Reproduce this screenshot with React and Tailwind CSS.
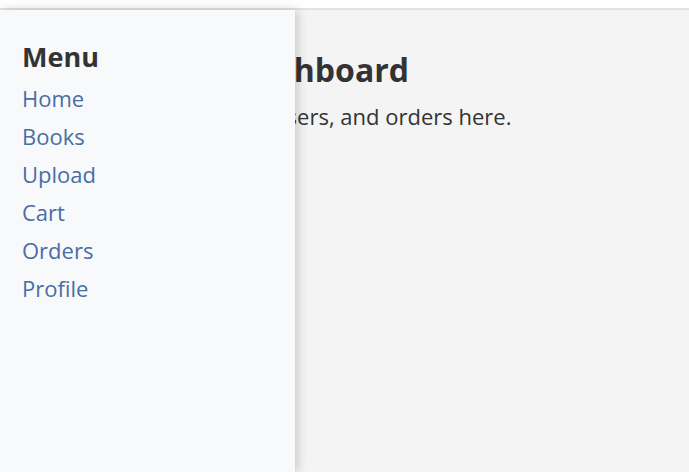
export default function App() {
  const links = ["Home", "Books", "Upload", "Cart", "Orders", "Profile"];
  return (
    <div
      className="w-[689px] h-[472px] overflow-hidden bg-white flex flex-col text-[#333333]"
      style={{ fontFamily: '"Open Sans", "Noto Sans", sans-serif' }}
    >
      <div className="h-[8px] bg-white shrink-0" />
      <div className="h-[2px] bg-[#e3e3e6] shrink-0" />
      <div className="relative flex-1 bg-[#f4f4f4]">
        <main className="pt-[40px]">
          <h1 className="pl-[122px] text-[32px] leading-[40px] font-bold text-[#333333]">Admin Dashboard</h1>
          <p className="pl-[112px] mt-[10px] text-[22px] leading-[33px] text-[#333333]">
            Manage books, users, and orders here.
          </p>
        </main>
        <aside className="absolute left-0 top-0 bottom-0 w-[295px] bg-[#f8f9fb] shadow-[3px_0_10px_rgba(0,0,0,0.18)] pl-[22px] pt-[30px]">
          <h2 className="text-[27px] leading-[34px] font-bold text-[#333333]">Menu</h2>
          <nav className="mt-[5px] flex flex-col">
            {links.map((l) => (
              <a key={l} href="#" className="text-[22px] leading-[38px] text-[#4a6da5]">
                {l}
              </a>
            ))}
          </nav>
        </aside>
      </div>
    </div>
  );
}
